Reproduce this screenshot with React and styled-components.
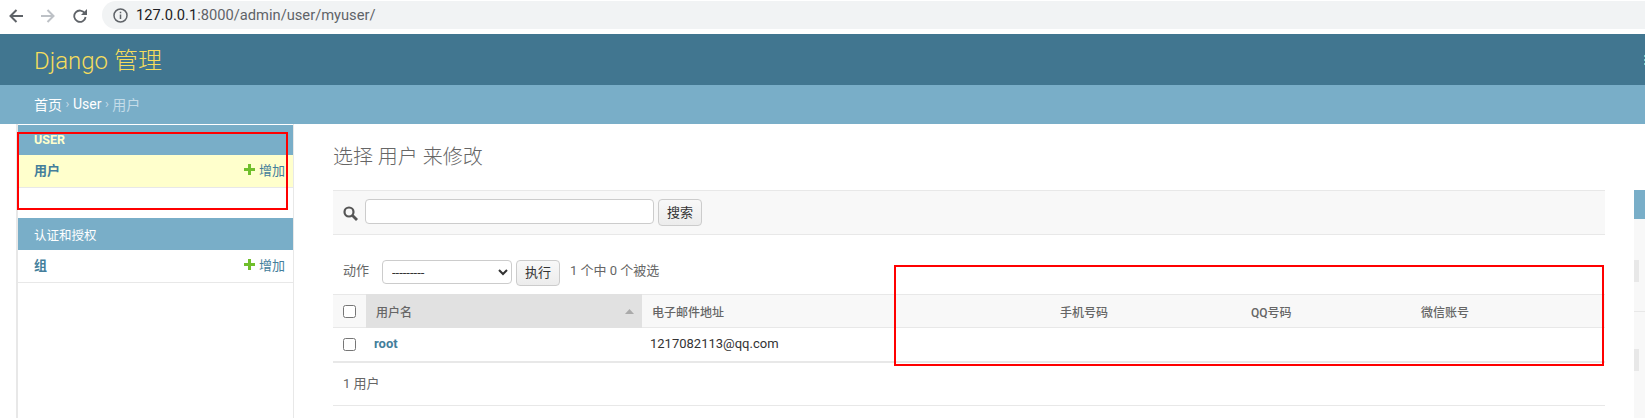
import React from "react";
import styled, { createGlobalStyle } from "styled-components";

const FONT = `Roboto, "Noto Sans CJK SC", sans-serif`;
const COLUMNS = "33px 276px 408px 191px 170px 194px";

const GlobalStyle = createGlobalStyle`
  html, body { margin: 0; padding: 0; background: #fff; }
  body { font-family: ${FONT}; font-size: 13px; color: #333; }
`;

const Page = styled.div`
  position: relative;
  width: 1645px;
  height: 418px;
  overflow: hidden;
  display: flex;
  flex-direction: column;
`;

const BrowserBar = styled.div`
  height: 34px;
  flex: none;
  display: flex;
  align-items: flex-start;
  background: #fff;
`;

const NavButton = styled.div`
  width: 14px;
  height: 14px;
  margin: 9px 0 0 ${(p) => p.$left}px;
  color: ${(p) => p.$color || "#5f6368"};
  display: flex;
`;

const UrlPill = styled.div`
  flex: 1;
  height: 28px;
  margin: 1px 0 0 15px;
  padding-left: 11px;
  display: flex;
  align-items: center;
  gap: 8px;
  background: #f1f3f4;
  border-radius: 14px 0 0 14px;
  color: #5f6368;
`;

const UrlText = styled.span`
  font-size: 14.7px;
  color: #5f6368;
  b {
    font-weight: 400;
    color: #202124;
  }
`;

const Header = styled.header`
  height: 51px;
  flex: none;
  box-sizing: border-box;
  display: flex;
  align-items: center;
  justify-content: space-between;
  padding: 0 0 3px 34px;
  background: #417690;
`;

const Branding = styled.h1`
  margin: 0;
  font-size: 24px;
  font-weight: 300;
  color: #f5dd5d;
`;

const UserToolsEdge = styled.div`
  width: 1px;
  height: 10px;
  margin-top: 3px;
  background: repeating-linear-gradient(#79d0d0 0 2px, transparent 2px 4px);
`;

const Breadcrumbs = styled.div`
  height: 39px;
  flex: none;
  box-sizing: border-box;
  display: flex;
  align-items: center;
  gap: 3.5px;
  padding: 0 0 2px 34px;
  background: #79aec8;
  font-size: 14px;
  color: #fff;
`;

const Crumb = styled.span`
  color: ${(p) => (p.$current ? "#c4dce8" : "#fff")};
`;

const CrumbSep = styled.span`
  color: #c4dce8;
  font-size: 13px;
`;

const Main = styled.div`
  flex: 1;
  display: flex;
  min-height: 0;
`;

const Sidebar = styled.nav`
  width: 275px;
  flex: none;
  margin-left: 16px;
  padding-top: 1px;
  border-left: 2px solid #e8e8e8;
  border-right: 1px solid #e8e8e8;
`;

const Caption = styled.div`
  height: ${(p) => (p.$tall ? 32 : 30)}px;
  box-sizing: border-box;
  display: flex;
  align-items: center;
  padding: 0 0 ${(p) => (p.$tall ? 0 : 2)}px 16px;
  background: #79aec8;
  font-size: 12.5px;
  font-weight: ${(p) => (p.$strong ? 700 : 400)};
  color: ${(p) => (p.$strong ? "#ffffcc" : "#fff")};
`;

const ModelRow = styled.div`
  height: 33px;
  box-sizing: border-box;
  display: flex;
  align-items: center;
  justify-content: space-between;
  padding: 0 8px 3px 16px;
  margin-bottom: ${(p) => p.$gap || 0}px;
  background: ${(p) => (p.$active ? "#ffffcc" : "#fff")};
  border-bottom: 1px solid #e8e8e8;
  color: #447e9b;
`;

const ModelName = styled.span`
  font-size: 13px;
  font-weight: 700;
`;

const AddLink = styled.span`
  display: flex;
  align-items: center;
  gap: 4px;
  font-size: 13px;
`;

const Content = styled.main`
  width: 1272px;
  flex: none;
  margin-left: 39px;
`;

const Title = styled.h2`
  margin: 20px 0 20px;
  font-size: 20px;
  line-height: 26px;
  font-weight: 300;
  color: #666;
`;

const Toolbar = styled.div`
  height: 43px;
  display: flex;
  align-items: flex-start;
  padding-left: 10px;
  background: #f8f8f8;
  border-top: 1px solid #e8e8e8;
  border-bottom: 1px solid #e8e8e8;
  color: #555;
`;

const SearchIcon = styled.svg`
  width: 15px;
  height: 15px;
  margin: 15px 7px 0 0;
  flex: none;
`;

const SearchInput = styled.input`
  width: 289px;
  height: 25px;
  margin-top: 8px;
  box-sizing: border-box;
  border: 1px solid #ccc;
  border-radius: 4px;
  background: #fff;
  padding: 2px 5px;
`;

const Button = styled.button`
  width: ${(p) => p.$width}px;
  height: ${(p) => p.$height || 26}px;
  margin: ${(p) => p.$top || 0}px 0 0 ${(p) => p.$left}px;
  padding: 0 0 3px;
  font-family: ${FONT};
  font-size: 13px;
  color: #333;
  background: linear-gradient(#f8f8f8, #ececec);
  border: 1px solid #ccc;
  border-radius: 4px;
`;

const Actions = styled.div`
  display: flex;
  align-items: flex-start;
  margin: 25px 0 10px;
  padding-left: 10px;
  height: 24px;
  color: #666;
`;

const ActionLabel = styled.label`
  width: 39px;
  line-height: 22px;
  font-size: 13px;
`;

const ActionSelect = styled.select`
  width: 130px;
  height: 24px;
  box-sizing: border-box;
  padding: 0 5px;
  font-family: ${FONT};
  font-size: 13px;
  color: #333;
  background: #fff;
  border: 1px solid #ccc;
  border-radius: 4px;
`;

const ActionCounter = styled.span`
  margin-left: 10px;
  line-height: 22px;
  font-size: 13px;
`;

const TableRow = styled.div`
  display: grid;
  grid-template-columns: ${COLUMNS};
`;

const HeadCell = styled.div`
  height: 32px;
  display: flex;
  align-items: center;
  justify-content: space-between;
  padding: 0 ${(p) => (p.$sorted ? 8 : 0)}px 0 10px;
  background: ${(p) => (p.$sorted ? "#e1e1e1" : "#f8f8f8")};
  border-top: 1px solid ${(p) => (p.$sorted ? "#e1e1e1" : "#e8e8e8")};
  border-bottom: 1px solid ${(p) => (p.$sorted ? "#e1e1e1" : "#e8e8e8")};
  font-size: 12px;
  font-weight: 500;
  color: #666;
`;

const BodyCell = styled.div`
  height: 35px;
  box-sizing: border-box;
  display: flex;
  align-items: center;
  padding: 0 0 ${(p) => (p.$box ? 0 : 3)}px ${(p) => (p.$box ? 10 : 8)}px;
  border-bottom: 2px solid #e8e8e8;
  font-size: 13px;
  color: #333;
`;

const Box = styled.input`
  width: 13px;
  height: 13px;
  margin: 0;
`;

const UserLink = styled.a`
  font-weight: 700;
  color: #447e9b;
`;

const Paginator = styled.div`
  height: 43px;
  box-sizing: border-box;
  display: flex;
  align-items: center;
  padding: 0 0 3px 10px;
  border-bottom: 1px solid #e8e8e8;
  font-size: 13px;
  color: #666;
`;

const FilterStrip = styled.aside`
  flex: 1;
  margin-left: 29px;
  margin-top: 66px;
  background: #f8f8f8;
`;

const FilterCaption = styled.div`
  height: 29px;
  background: #79aec8;
`;

const FilterGroup = styled.div`
  height: 93px;
  padding-top: ${(p) => p.$top}px;
  box-sizing: border-box;
  border-bottom: ${(p) => (p.$ruled ? "1px solid #e8e8e8" : "none")};
`;

const FilterMark = styled.div`
  width: 5px;
  height: 22px;
  background: #e8e8e8;
`;

const Annotation = styled.div`
  position: absolute;
  left: ${(p) => p.$x}px;
  top: ${(p) => p.$y}px;
  width: ${(p) => p.$w}px;
  height: ${(p) => p.$h}px;
  box-sizing: border-box;
  border: 2px solid #ff0000;
  pointer-events: none;
`;

const Line = ({ d, width = 2 }) => (
    <svg width="14" height="14" viewBox="0 0 14 14" fill="none" stroke="currentColor" strokeWidth={width}>
        <path d={d} />
    </svg>
);

const PlusIcon = () => (
    <svg width="11" height="11" viewBox="0 0 11 11">
        <path d="M4 0h3v4h4v3H7v4H4V7H0V4h4z" fill="#70bf2b" />
    </svg>
);

const InfoIcon = () => (
    <svg width="15" height="15" viewBox="0 0 15 15" fill="none" stroke="currentColor" strokeWidth="1.5">
        <circle cx="7.5" cy="7.5" r="6.5" />
        <path d="M7.5 6.5v4.5M7.5 3.8v1.5" />
    </svg>
);

const SortIcon = () => (
    <svg width="9" height="5" viewBox="0 0 9 5">
        <path d="M4.5 0L9 5H0z" fill="#aaa" />
    </svg>
);

const App = () => (
    <Page>
        <GlobalStyle />
        <BrowserBar>
            <NavButton $left={9}>
                <Line d="M14 7H1.5M7.5 1L1.5 7l6 6" />
            </NavButton>
            <NavButton $left={18} $color="#bdc1c6">
                <Line d="M0 7h12.5M6.5 1l6 6-6 6" />
            </NavButton>
            <NavButton $left={18}>
                <svg width="14" height="14" viewBox="0 0 14 14" fill="none">
                    <path d="M11.8 4.2A5.7 5.7 0 1 0 12.6 8" stroke="currentColor" strokeWidth="1.8" />
                    <path d="M14 0v6H8z" fill="currentColor" />
                </svg>
            </NavButton>
            <UrlPill>
                <InfoIcon />
                <UrlText>
                    <b>127.0.0.1</b>:8000/admin/user/myuser/
                </UrlText>
            </UrlPill>
        </BrowserBar>

        <Header>
            <Branding>Django 管理</Branding>
            <UserToolsEdge />
        </Header>
        <Breadcrumbs>
            <Crumb>首页</Crumb>
            <CrumbSep>›</CrumbSep>
            <Crumb>User</Crumb>
            <CrumbSep>›</CrumbSep>
            <Crumb $current>用户</Crumb>
        </Breadcrumbs>

        <Main>
            <Sidebar>
                <Caption $strong>USER</Caption>
                <ModelRow $active $gap={30}>
                    <ModelName>用户</ModelName>
                    <AddLink>
                        <PlusIcon />
                        增加
                    </AddLink>
                </ModelRow>
                <Caption $tall>认证和授权</Caption>
                <ModelRow>
                    <ModelName>组</ModelName>
                    <AddLink>
                        <PlusIcon />
                        增加
                    </AddLink>
                </ModelRow>
            </Sidebar>

            <Content>
                <Title>选择 用户 来修改</Title>
                <Toolbar>
                    <SearchIcon viewBox="0 0 15 15" fill="none" stroke="currentColor">
                        <circle cx="6" cy="6" r="4.5" strokeWidth="2.2" />
                        <path d="M9.5 9.5L14 14" strokeWidth="2.8" />
                    </SearchIcon>
                    <SearchInput type="text" />
                    <Button $width={44} $height={27} $left={4} $top={8}>
                        搜索
                    </Button>
                </Toolbar>
                <Actions>
                    <ActionLabel>动作</ActionLabel>
                    <ActionSelect defaultValue="">
                        <option value="">---------</option>
                    </ActionSelect>
                    <Button $width={44} $left={4}>
                        执行
                    </Button>
                    <ActionCounter>1 个中 0 个被选</ActionCounter>
                </Actions>
                <TableRow>
                    <HeadCell>
                        <Box type="checkbox" />
                    </HeadCell>
                    <HeadCell $sorted>
                        用户名
                        <SortIcon />
                    </HeadCell>
                    <HeadCell>电子邮件地址</HeadCell>
                    <HeadCell>手机号码</HeadCell>
                    <HeadCell>QQ号码</HeadCell>
                    <HeadCell>微信账号</HeadCell>
                </TableRow>
                <TableRow>
                    <BodyCell $box>
                        <Box type="checkbox" />
                    </BodyCell>
                    <BodyCell>
                        <UserLink>root</UserLink>
                    </BodyCell>
                    <BodyCell>1217082113@qq.com</BodyCell>
                    <BodyCell />
                    <BodyCell />
                    <BodyCell />
                </TableRow>
                <Paginator>1 用户</Paginator>
            </Content>

            <FilterStrip>
                <FilterCaption />
                <FilterGroup $ruled $top={41}>
                    <FilterMark />
                </FilterGroup>
                <FilterGroup $top={37}>
                    <FilterMark />
                </FilterGroup>
            </FilterStrip>
        </Main>

        <Annotation $x={17} $y={132} $w={271} $h={78} />
        <Annotation $x={894} $y={265} $w={710} $h={101} />
    </Page>
);

export default App;
